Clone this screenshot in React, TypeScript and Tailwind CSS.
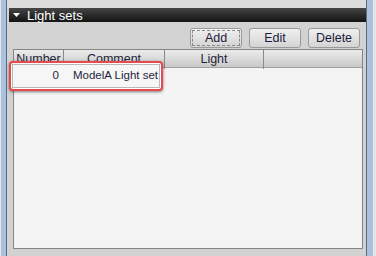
import React from "react";

const font = { fontFamily: '"Liberation Sans", Arial, sans-serif' };

function Btn({ label, focus }: { label: string; focus?: boolean }) {
  return (
    <div className="w-[52px] h-[20px] rounded-[3px] border border-[#9a9a9a] bg-gradient-to-b from-[#f0f0f0] to-[#d4d4d4] p-[1px] flex">
      <div
        className={
          "flex-1 flex items-center justify-center text-[12.5px] text-[#1a1a3a] " +
          (focus ? "border border-dashed border-[#8a8a8a]" : "")
        }
      >
        {label}
      </div>
    </div>
  );
}

export default function App() {
  return (
    <div className="w-[376px] h-[256px] flex bg-[#d2d2d2] overflow-hidden relative" style={font}>
      <div className="w-px bg-[#e6e6e6]" />
      <div className="w-[5px] bg-[#a8c2e0]" />
      <div className="w-px bg-[#5e6a78]" />
      <div className="flex-1 flex flex-col">
        <div className="h-[8px] bg-[#dcdcdc]" />
        <div className="h-[14px] ml-[2px] bg-gradient-to-b from-[#464646] to-[#141414] flex items-center pl-[4px] gap-[7px]">
          <svg width="7" height="4" viewBox="0 0 7 4">
            <polygon points="0,0 7,0 3.5,4" fill="#ffffff" />
          </svg>
          <span className="text-white text-[13px] leading-none">Light sets</span>
        </div>
        <div className="flex justify-end gap-[7px] pt-[6px] pr-[6px]">
          <Btn label="Add" focus />
          <Btn label="Edit" />
          <Btn label="Delete" />
        </div>
        <div className="mt-[1px] ml-[6px] mr-[3px] mb-[7px] flex-1 border border-[#858585] bg-[#f4f4f4] flex flex-col">
          <div className="h-[18px] grid grid-cols-[50px_101px_99px_1fr] bg-gradient-to-b from-[#ececec] to-[#c9c9c9] border-b border-[#a0a0a0] text-[12.5px] text-[#1e1e3c]">
            <div className="border-r border-[#8a8a8a] flex items-center justify-center">Number</div>
            <div className="border-r border-[#8a8a8a] flex items-center justify-center">Comment</div>
            <div className="border-r border-[#8a8a8a] flex items-center justify-center">Light</div>
            <div />
          </div>
          <div className="flex-1" />
        </div>
      </div>
      <div className="w-px bg-[#5e6a78]" />
      <div className="w-[6px] bg-[#a8c2e0]" />
      <div className="w-[3px] bg-[#e6e6e6]" />

      <div className="absolute left-[9px] top-[61px] w-[154px] h-[30px] rounded-[4px] border-2 border-[#e64a4c] bg-white p-[1px] shadow-[0_1px_3px_rgba(0,0,0,0.5)]">
        <div className="w-full h-full border border-[#b8b8b8] bg-[#f6f6f6] flex items-center text-[11.5px] text-[#1e1e3c]">
          <span className="w-[46px] text-right">0</span>
          <span className="ml-[14px] whitespace-nowrap">ModelA Light set</span>
        </div>
      </div>
    </div>
  );
}
